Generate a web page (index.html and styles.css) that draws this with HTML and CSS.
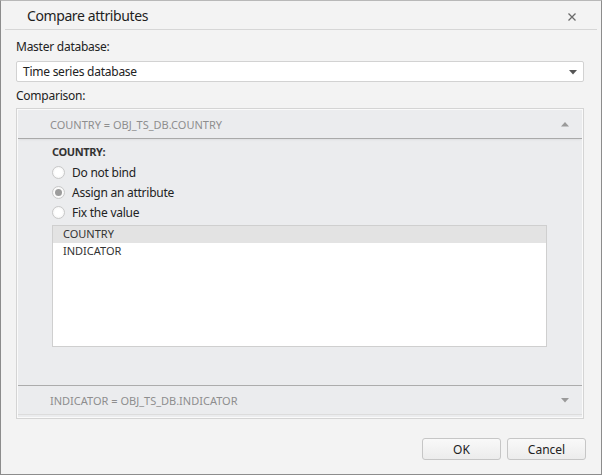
FILE: index.html
```html
<!DOCTYPE html>
<html>
<head>
<meta charset="utf-8">
<link rel="stylesheet" href="styles.css">
</head>
<body>
<div class="dialog">
  <div class="titlebar">
    <span class="title">Compare attributes</span>
    <svg class="close" width="10" height="10" viewBox="0 0 10 10"><path d="M1.5 1.5 L8.5 8.5 M8.5 1.5 L1.5 8.5" stroke="#6a6a6a" stroke-width="1.3"/></svg>
  </div>
  <div class="sep"></div>
  <div class="body">
    <div class="label">Master database:</div>
    <div class="combo">
      <span>Time series database</span>
      <svg width="8" height="5" viewBox="0 0 8 5"><path d="M0 0 H8 L4 4.5 Z" fill="#555"/></svg>
    </div>
    <div class="label label2">Comparison:</div>
    <div class="group">
      <div class="hdr hdr-open">
        <span>COUNTRY = OBJ_TS_DB.COUNTRY</span>
        <svg width="8" height="5" viewBox="0 0 8 5"><path d="M0 4.5 H8 L4 0 Z" fill="#9a9a9a"/></svg>
      </div>
      <div class="content">
        <div class="caption">COUNTRY:</div>
        <div class="radio"><span class="dot"></span><span>Do not bind</span></div>
        <div class="radio"><span class="dot on"></span><span>Assign an attribute</span></div>
        <div class="radio"><span class="dot"></span><span>Fix the value</span></div>
        <div class="list">
          <div class="row sel">COUNTRY</div>
          <div class="row">INDICATOR</div>
        </div>
      </div>
      <div class="hdr hdr-closed">
        <span>INDICATOR = OBJ_TS_DB.INDICATOR</span>
        <svg width="8" height="5" viewBox="0 0 8 5"><path d="M0 0 H8 L4 4.5 Z" fill="#9a9a9a"/></svg>
      </div>
    </div>
  </div>
  <div class="footer">
    <button class="btn">OK</button>
    <button class="btn">Cancel</button>
  </div>
</div>
</body>
</html>
```
FILE: styles.css
```css
html, body {
  margin: 0;
  padding: 0;
}
body {
  width: 602px;
  height: 475px;
  font-family: "Noto Sans", "Open Sans", sans-serif;
  font-size: 12px;
  letter-spacing: -0.25px;
  color: #333;
}
.dialog {
  box-sizing: border-box;
  width: 602px;
  height: 475px;
  background: #f3f3f3;
  border: 1px solid #8c8c8c;
  border-top-color: #b8b8b8;
  display: flex;
  flex-direction: column;
}
.titlebar {
  height: 28px;
  display: flex;
  align-items: center;
  justify-content: space-between;
  padding: 0 24px 0 26px;
}
.title {
  font-size: 14px;
  letter-spacing: -0.4px;
  color: #1e1e1e;
}
.close {
  margin-top: 4px;
}
.sep {
  height: 1px;
  background: #d6d6d6;
  margin: 0 4px;
}
.body {
  padding: 9px 17px 0 15px;
}
.label {
  height: 16px;
  line-height: 16px;
  color: #222;
}
.label2 {
  margin-top: 6px;
}
.combo {
  margin-top: 6px;
  height: 19px;
  border: 1px solid #d2d2d2;
  border-radius: 2px;
  background: #fff;
  display: flex;
  align-items: center;
  justify-content: space-between;
  padding: 0 6px 0 6px;
  color: #222;
}
.combo svg {
  margin-top: 1px;
}
.group {
  margin-top: 4px;
  border: 1px solid #d4d4d4;
  background: #ebecee;
  box-shadow: inset 0 0 0 1px #fafafa;
  padding: 1px 1px 3px 1px;
}
.hdr {
  display: flex;
  align-items: center;
  justify-content: space-between;
  color: #8e8e8e;
  font-size: 11px;
  letter-spacing: 0;
  padding: 0 13px 0 32px;
}
.hdr-open {
  height: 28px;
  border-bottom: 1px solid #a9a9a9;
  box-shadow: 0 2px 2px -1px rgba(0,0,0,0.06);
}
.hdr-closed {
  height: 28px;
  border-top: 1px solid #acacac;
  border-bottom: 1px solid #dcdcdc;
}
.content {
  padding: 5px 35px 38px 34px;
}
.caption {
  font-weight: bold;
  height: 16px;
  line-height: 16px;
  font-size: 11px;
  letter-spacing: -0.4px;
  color: #333;
}
.radio {
  height: 20px;
  display: flex;
  align-items: center;
  gap: 7px;
  color: #222;
}
.caption + .radio {
  margin-top: 2px;
}
.dot {
  box-sizing: border-box;
  width: 13px;
  height: 13px;
  border-radius: 50%;
  border: 1px solid #c8c8c8;
  background: radial-gradient(circle, #ffffff 40%, #eeeeee 100%);
  display: flex;
  align-items: center;
  justify-content: center;
}
.dot.on::after {
  content: "";
  width: 7px;
  height: 7px;
  border-radius: 50%;
  background: #9c9c9c;
}
.list {
  margin-top: 3px;
  height: 120px;
  border: 1px solid #cfcfcf;
  background: #fff;
}
.row {
  height: 16px;
  line-height: 16px;
  padding-left: 10px;
  font-size: 11px;
  letter-spacing: 0;
  color: #333;
}
.row.sel {
  background: #e3e3e3;
  height: 17px;
}
.footer {
  display: flex;
  justify-content: flex-end;
  gap: 6px;
  padding: 19px 15px 0 0;
}
.btn {
  box-sizing: border-box;
  width: 79px;
  height: 22px;
  border: 1px solid #c6c6c6;
  border-radius: 3px;
  background: linear-gradient(#f9f9f9, #ececec);
  font-family: "Noto Sans", "Open Sans", sans-serif;
  font-size: 12px;
  color: #222;
  padding: 0;
}
```
